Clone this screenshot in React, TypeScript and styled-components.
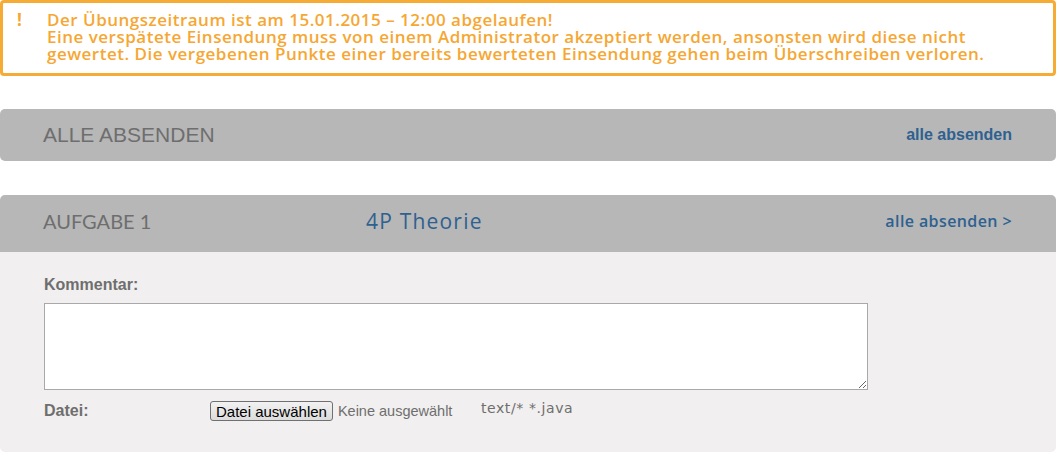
import React from "react";
import styled, { createGlobalStyle } from "styled-components";

const Global = createGlobalStyle`
  html, body { margin: 0; padding: 0; background: #ffffff; }
  body { font-family: "Liberation Sans", Arial, sans-serif; }
`;

const Page = styled.div`
  width: 1056px;
  display: flex;
  flex-direction: column;
`;

const Warning = styled.div`
  box-sizing: border-box;
  height: 76px;
  border: 3px solid #f6ab35;
  border-radius: 4px;
  display: flex;
  padding: 8px 0 0 14px;
  color: #f6a733;
  font-family: "Open Sans", sans-serif;
  font-weight: 600;
  font-size: 17px;
  letter-spacing: 0.5px;
  line-height: 17px;
`;

const Bang = styled.div`
  width: 30px;
  flex: none;
  font-weight: 700;
`;

const WarningText = styled.div`
  width: 960px;
  display: flex;
  flex-direction: column;
`;

const Bar = styled.div<{ $top?: boolean }>`
  box-sizing: border-box;
  background: #b7b7b7;
  border-radius: ${(p) => (p.$top ? "5px 5px 0 0" : "5px")};
  height: ${(p) => (p.$top ? "57px" : "52px")};
  display: flex;
  align-items: center;
  padding: ${(p) => (p.$top ? "0 44px 5px 43px" : "0 44px 0 43px")};
  margin-top: ${(p) => (p.$top ? "34px" : "33px")};
`;

const BarTitle = styled.div<{ $humanist?: boolean }>`
  color: #6e6e6e;
  font-size: ${(p) => (p.$humanist ? "20px" : "21px")};
  font-family: ${(p) => (p.$humanist ? '"Lato", sans-serif' : '"Liberation Sans", Arial, sans-serif')};
  width: ${(p) => (p.$humanist ? "323px" : "auto")};
`;

const BarSub = styled.div`
  color: #2e6190;
  font-size: 21px;
  letter-spacing: 1.2px;
  font-family: "Open Sans", sans-serif;
`;

const BarLink = styled.a<{ $humanist?: boolean }>`
  margin-left: auto;
  color: #2e6190;
  font-weight: ${(p) => (p.$humanist ? 600 : 700)};
  font-size: 16px;
  letter-spacing: ${(p) => (p.$humanist ? "0.4px" : "0")};
  font-family: ${(p) => (p.$humanist ? '"Open Sans", sans-serif' : '"Liberation Sans", Arial, sans-serif')};
  text-decoration: none;
`;

const Panel = styled.div`
  background: #f1efef;
  border-radius: 0 0 5px 5px;
  height: 200px;
  box-sizing: border-box;
  padding: 24px 0 0 44px;
  display: flex;
  flex-direction: column;
`;

const Label = styled.div`
  color: #6e6e6e;
  font-weight: 700;
  font-size: 16px;
  line-height: 18px;
`;

const TextArea = styled.textarea`
  box-sizing: border-box;
  width: 824px;
  height: 87px;
  margin: 9px 0 0;
  border: 1px solid #a9a9a9;
  background: #fff;
  resize: vertical;
`;

const FileRow = styled.div`
  display: flex;
  align-items: center;
  margin-top: 11px;
`;

const FileLabel = styled(Label)`
  width: 166px;
`;

const FileButton = styled.button`
  font-family: "Liberation Sans", Arial, sans-serif;
  font-size: 15px;
  color: #000;
  height: 20px;
  padding: 0 5px;
  border: 1px solid #707070;
  border-radius: 3px;
  background: linear-gradient(#f2f2f2, #dcdcdc);
`;

const FileNone = styled.span`
  font-size: 14.5px;
  color: #6e6e6e;
  margin-left: 5px;
  width: 143px;
`;

const Types = styled.span`
  font-family: "DejaVu Sans", sans-serif;
  font-size: 14px;
  letter-spacing: 0.6px;
  color: #6e6e6e;
  margin-top: -6px;
`;

export default function App() {
  return (
    <>
      <Global />
      <Page>
        <Warning>
          <Bang>!</Bang>
          <WarningText>
            <span>Der Übungszeitraum ist am 15.01.2015 – 12:00 abgelaufen!</span>
            <span>
              Eine verspätete Einsendung muss von einem Administrator akzeptiert werden, ansonsten wird diese nicht
              gewertet. Die vergebenen Punkte einer bereits bewerteten Einsendung gehen beim Überschreiben verloren.
            </span>
          </WarningText>
        </Warning>
        <Bar>
          <BarTitle>ALLE ABSENDEN</BarTitle>
          <BarLink href="#">alle absenden</BarLink>
        </Bar>
        <Bar $top>
          <BarTitle $humanist>AUFGABE 1</BarTitle>
          <BarSub>4P Theorie</BarSub>
          <BarLink $humanist href="#">alle absenden &gt;</BarLink>
        </Bar>
        <Panel>
          <Label>Kommentar:</Label>
          <TextArea />
          <FileRow>
            <FileLabel>Datei:</FileLabel>
            <FileButton>Datei auswählen</FileButton>
            <FileNone>Keine ausgewählt</FileNone>
            <Types>text/* *.java</Types>
          </FileRow>
        </Panel>
      </Page>
    </>
  );
}
